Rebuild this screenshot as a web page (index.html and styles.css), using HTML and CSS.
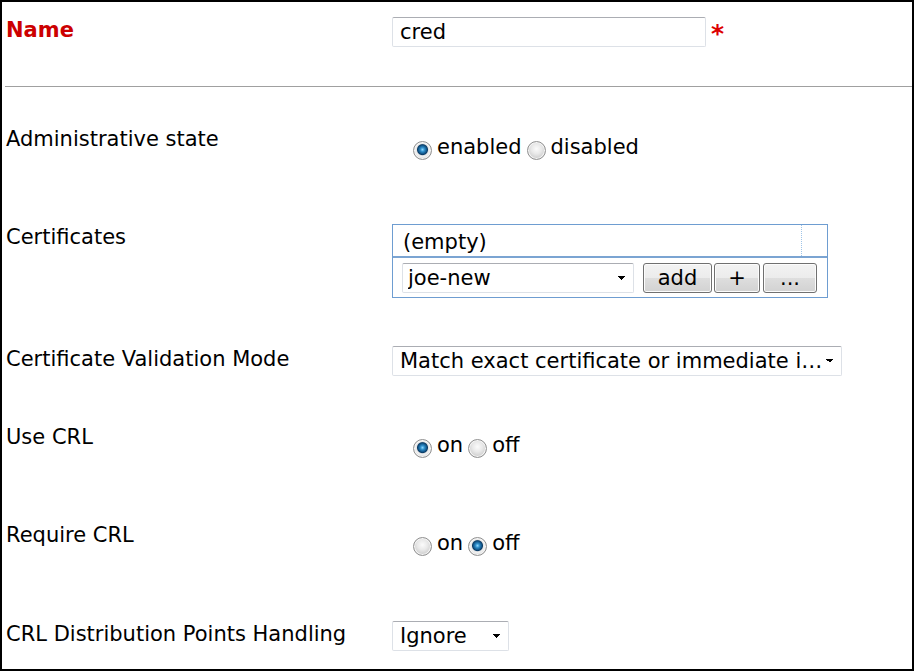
FILE: index.html
```html
<!DOCTYPE html>
<html lang="en">
<head>
    <meta charset="UTF-8">
    <meta name="viewport" content="width=device-width, initial-scale=1.0">
    <title>Credential</title>
    <link rel="stylesheet" href="styles.css">
</head>
<body>
    <div class="frame">
        <div class="row row-name">
            <div class="label label-required">Name</div>
            <div class="control">
                <input type="text" class="text-input" value="cred">
                <span class="asterisk">*</span>
            </div>
        </div>

        <hr class="divider">

        <div class="row">
            <div class="label">Administrative state</div>
            <div class="control radios">
                <label class="radio"><input type="radio" name="admin" checked>enabled</label>
                <label class="radio"><input type="radio" name="admin">disabled</label>
            </div>
        </div>

        <div class="row">
            <div class="label">Certificates</div>
            <div class="control">
                <div class="cert-box">
                    <div class="cert-list">
                        <div class="cert-item">(empty)</div>
                        <div class="cert-pad"></div>
                    </div>
                    <div class="cert-add">
                        <select class="select select-cert">
                            <option>joe-new</option>
                        </select>
                        <button class="btn btn-add">add</button>
                        <button class="btn btn-plus">+</button>
                        <button class="btn btn-more">...</button>
                    </div>
                </div>
            </div>
        </div>

        <div class="row">
            <div class="label">Certificate Validation Mode</div>
            <div class="control">
                <select class="select select-mode">
                    <option>Match exact certificate or immediate issuer</option>
                </select>
            </div>
        </div>

        <div class="row">
            <div class="label">Use CRL</div>
            <div class="control radios">
                <label class="radio"><input type="radio" name="usecrl" checked>on</label>
                <label class="radio"><input type="radio" name="usecrl">off</label>
            </div>
        </div>

        <div class="row">
            <div class="label">Require CRL</div>
            <div class="control radios radios-tall">
                <label class="radio"><input type="radio" name="reqcrl">on</label>
                <label class="radio"><input type="radio" name="reqcrl" checked>off</label>
            </div>
        </div>

        <div class="row">
            <div class="label">CRL Distribution Points Handling</div>
            <div class="control">
                <select class="select select-crl">
                    <option>Ignore</option>
                </select>
            </div>
        </div>
    </div>
</body>
</html>
```

FILE: styles.css
```css
* {
    box-sizing: border-box;
}

html, body {
    margin: 0;
}

body {
    font-family: "DejaVu Sans", Verdana, sans-serif;
    font-size: 21px;
    line-height: 24px;
    color: #000;
    background-color: #fff;
}

.frame {
    height: 671px;
    border: 2px solid #000;
    padding: 15px 0 0 4px;
    overflow: hidden;
}

.row {
    display: flex;
    align-items: flex-start;
    padding-bottom: 48px;
}

.row-name {
    padding-bottom: 0;
}

.label {
    width: 386px;
    flex: none;
    padding-top: 1px;
}

.label-required {
    color: #cc0000;
    font-weight: bold;
}

.control {
    display: flex;
    align-items: flex-start;
}

.text-input {
    width: 314px;
    height: 30px;
    font: inherit;
    color: #000;
    padding: 0 7px;
    border: 1px solid #dde1e7;
    border-top-color: #abadb3;
    border-radius: 2px;
    outline: none;
}

.asterisk {
    color: #dd0000;
    font-weight: bold;
    font-size: 25px;
    line-height: 26px;
    margin: 4px 0 0 5px;
}

.divider {
    border: 0;
    border-top: 1px solid #a0a0a0;
    margin: 39px 0 39px -1px;
}

.radios {
    height: 50px;
    padding: 9px 0 0 21px;
    gap: 5px;
}

.radios-tall {
    height: 51px;
}

.radio {
    display: flex;
    align-items: flex-start;
    gap: 5px;
}

.radio input {
    appearance: none;
    width: 19px;
    height: 19px;
    margin: 6px 0 0;
    border-radius: 50%;
    border: 1px solid #919191;
    background: radial-gradient(circle at 50% 40%, #fbfbfb 0, #e9e9e9 5px, #d2d2d2 9px);
    box-shadow: inset 0 0 0 1px #f6f6f6;
}

.radio input:checked {
    background: radial-gradient(circle at 50% 45%, #8fd8ff 0, #2f8fcb 2px, #145a8e 4px, #0b3c66 5px, #e6e6e6 6px, #f1f1f1 7px, #d4d4d4 9px);
}

.cert-box {
    width: 436px;
    border: 1px solid #6e9dd1;
}

.cert-list {
    display: flex;
    border-bottom: 2px solid #7ba4d2;
}

.cert-item {
    flex: 1;
    padding: 5px 10px 2px;
}

.cert-pad {
    width: 26px;
    border-left: 1px dotted #9ec4e8;
}

.cert-add {
    display: flex;
    align-items: flex-start;
    gap: 2px;
    padding: 5px 0 4px 9px;
}

.select {
    appearance: none;
    height: 30px;
    font: inherit;
    color: #000;
    padding: 0 26px 0 7px;
    border: 1px solid #dde1e7;
    border-top-color: #abadb3;
    border-radius: 2px;
    outline: none;
    white-space: nowrap;
    overflow: hidden;
    text-overflow: ellipsis;
    background-color: #fff;
    background-image: linear-gradient(45deg, transparent 50%, #000 50%), linear-gradient(135deg, #000 50%, transparent 50%);
    background-position: right 11px center, right 7px center;
    background-size: 4px 4px;
    background-repeat: no-repeat;
}

.select-cert {
    width: 232px;
    padding-left: 5px;
}

.select-mode {
    width: 450px;
    padding-right: 16px;
}

.select-crl {
    width: 117px;
}

.btn {
    height: 30px;
    font: inherit;
    line-height: 24px;
    color: #000;
    padding: 0;
    border: 1px solid #707070;
    border-radius: 3px;
    background: linear-gradient(#f3f3f3 0, #ececec 50%, #dedede 50%, #d2d2d2 100%);
    box-shadow: inset 0 0 0 1px #fcfcfc;
}

.btn-add {
    width: 69px;
    margin-left: 7px;
}

.btn-plus {
    width: 46px;
}

.btn-more {
    width: 54px;
    margin-left: 1px;
}
```
